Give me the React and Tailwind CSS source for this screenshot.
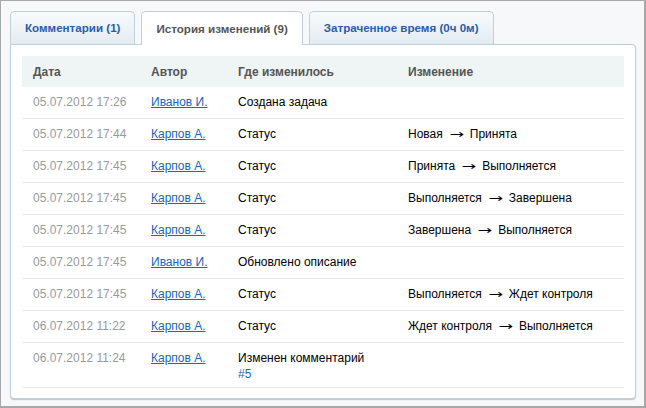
const rows = [
  { date: "05.07.2012 17:26", author: "Иванов И.", where: "Создана задача" },
  { date: "05.07.2012 17:44", author: "Карпов А.", where: "Статус", from: "Новая", to: "Принята" },
  { date: "05.07.2012 17:45", author: "Карпов А.", where: "Статус", from: "Принята", to: "Выполняется" },
  { date: "05.07.2012 17:45", author: "Карпов А.", where: "Статус", from: "Выполняется", to: "Завершена" },
  { date: "05.07.2012 17:45", author: "Карпов А.", where: "Статус", from: "Завершена", to: "Выполняется" },
  { date: "05.07.2012 17:45", author: "Иванов И.", where: "Обновлено описание" },
  { date: "05.07.2012 17:45", author: "Карпов А.", where: "Статус", from: "Выполняется", to: "Ждет контроля" },
  { date: "06.07.2012 11:22", author: "Карпов А.", where: "Статус", from: "Ждет контроля", to: "Выполняется" },
  { date: "06.07.2012 11:24", author: "Карпов А.", where: "Изменен комментарий", link: "#5" },
];

const Tab = ({ children, active }) => (
  <div
    className={
      active
        ? "relative z-10 -mb-px h-[34px] px-[14px] flex items-center rounded-t-[5px] border border-b-0 border-[#bfd0d8] bg-white font-bold text-[11.6px] text-[#555]"
        : "h-[33px] px-[14px] flex items-center rounded-t-[5px] border border-b-0 border-[#bfd0d8] bg-gradient-to-b from-[#f8fafc] to-[#e3ecf3] font-bold text-[11.6px] text-[#2a5da8]"
    }
  >
    {children}
  </div>
);

export default function App() {
  return (
    <div
      className="w-[646px] h-[408px] bg-[#f6f8fa] border border-[#a8a8a8] border-r-2 border-b-2 text-[12px] leading-[16px] text-black"
      style={{ fontFamily: '"Liberation Sans", Arial, sans-serif' }}
    >
      <div className="pt-[10px] pl-[9px] pr-[8px]">
        <div className="flex gap-[6px] items-end">
          <Tab>Комментарии (1)</Tab>
          <Tab active>История изменений (9)</Tab>
          <Tab>Затраченное время (0ч 0м)</Tab>
        </div>
        <div className="bg-white border border-[#bfd0d8] rounded-[4px] rounded-tl-none shadow-[0_1px_1px_rgba(120,140,150,0.45)] px-[11px] pt-[11px] pb-[10px]">
          <div className="grid grid-cols-[118px_87px_170px_1fr] bg-[#eff4f4] h-[31px] items-center font-bold text-[#555]">
            <div className="px-[11px]">Дата</div>
            <div className="px-[11px]">Автор</div>
            <div className="px-[11px]">Где изменилось</div>
            <div className="px-[11px]">Изменение</div>
          </div>
          {rows.map((r, i) => (
            <div
              key={i}
              className={
                r.link
                  ? "grid grid-cols-[118px_87px_170px_1fr] border-b border-[#e6e9ea] pt-[7px] pb-[5px]"
                  : "grid grid-cols-[118px_87px_170px_1fr] border-b border-[#e6e9ea] pt-[7px] pb-[8px]"
              }
            >
              <div className="px-[11px] text-[#999]">{r.date}</div>
              <div className="px-[11px]">
                <a href="#" className="text-[#2064b8] underline">{r.author}</a>
              </div>
              <div className="px-[11px]">
                {r.where}
                {r.link && (
                  <div>
                    <a href="#" className="text-[#2064b8]">{r.link}</a>
                  </div>
                )}
              </div>
              <div className="px-[11px]">
                {r.from && (
                  <span>
                    {r.from}
                    <span
                      className="inline-block w-[13px] mx-[7px] text-center scale-x-[1.45]"
                      style={{ fontFamily: '"DejaVu Sans", sans-serif' }}
                    >
                      →
                    </span>
                    {r.to}
                  </span>
                )}
              </div>
            </div>
          ))}
        </div>
      </div>
    </div>
  );
}
